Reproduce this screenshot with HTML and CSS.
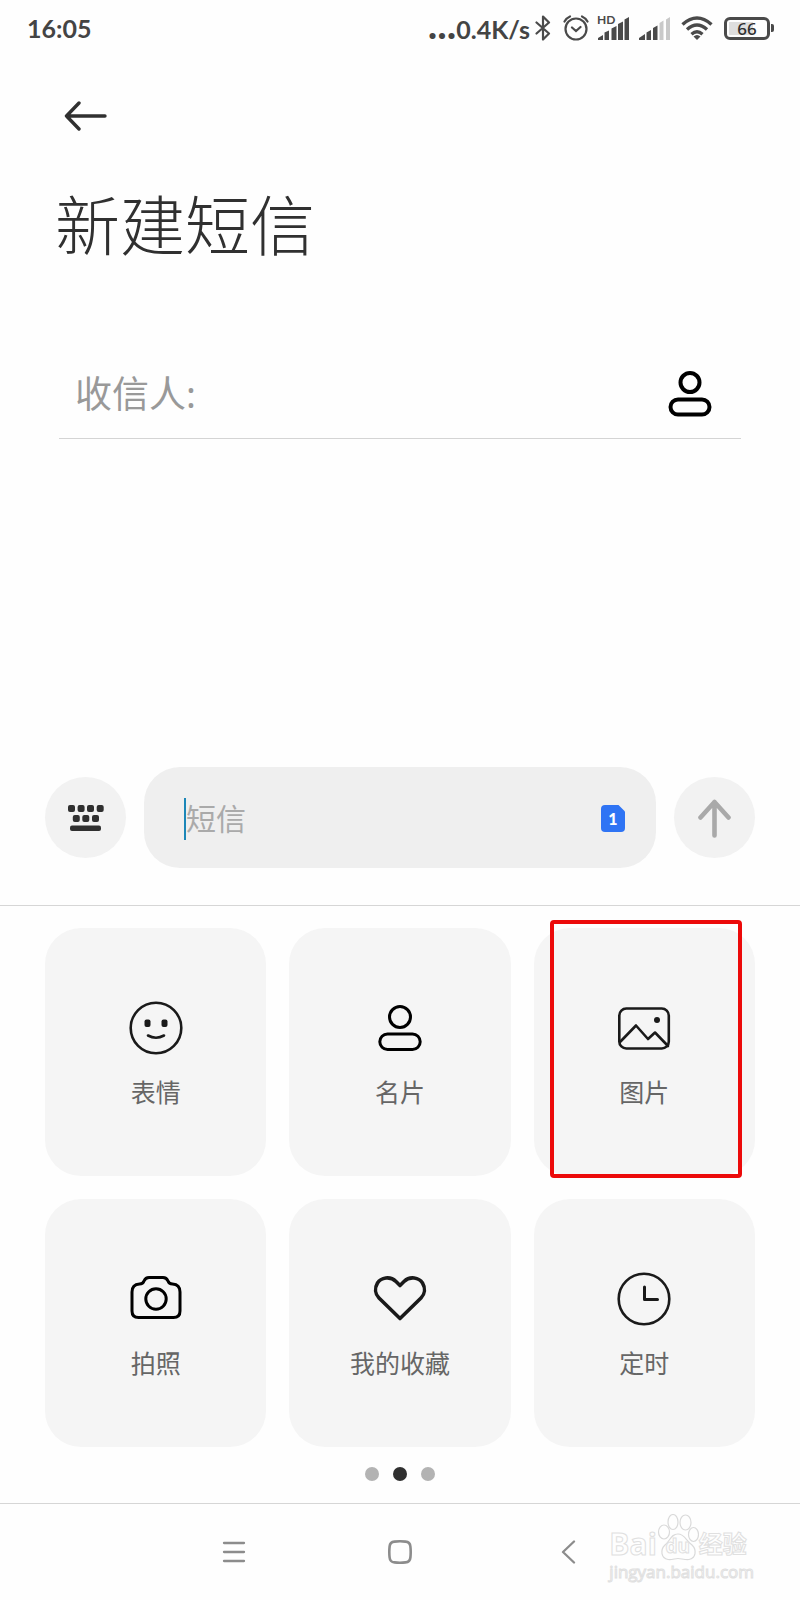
FILE: index.html
```html
<!DOCTYPE html>
<html lang="zh-CN">
<head>
<meta charset="utf-8">
<meta name="viewport" content="width=device-width, initial-scale=1">
<title>新建短信</title>
<link rel="stylesheet" href="styles.css">
</head>
<body>
<div class="status">
  <span class="status-text">16:05</span>
  <div class="status-right">
    <span class="status-text"><span class="ellipsis">...</span>0.4K/s</span>
    <svg class="bluetooth" width="16" height="26" viewBox="0 0 16 26" fill="none" stroke="#4a4a4a" stroke-width="2.2" stroke-linejoin="round" stroke-linecap="round"><path d="M1.5 7.5 14 18.500 8 24.500V1.500L14 7.500 1.500 18.500"/></svg>
    <svg class="alarm" width="26" height="26" viewBox="0 0 26 26" fill="none" stroke="#4a4a4a" stroke-width="2.2" stroke-linecap="round"><circle cx="13" cy="14" r="10.500"/><path d="M1.500 6.500Q3.500 3 7 1.500M24.500 6.500Q22.500 3 19 1.500M9 12.500l4 3.500 4.500-4"/></svg>
    <span class="cell">
      <span class="cell-tag">HD</span>
      <svg width="31" height="23" viewBox="0 0 31 23" fill="#4a4a4a"><path d="M0 23v-2l5-3v5zM6.500 15.500l4.500-2V23H6.500zM13.500 11.500l5-2.500V23h-5zM20 7l5-2.500V23h-5zM26.500 2.500 31 0v23h-4.500z"/></svg>
    </span>
    <svg class="cell-two" width="31" height="23" viewBox="0 0 31 23" fill="#4a4a4a"><path d="M0 23v-2l6-4v6zM7.500 15.500l4.500-2.500v10H7.500zM14 11l4.500-2.500V23H14z"/><path fill="#c9c9c9" d="M20.500 6l4-2.500V23h-4zM27 2.500 31 0v23h-4z"/></svg>
    <svg class="wifi" width="32" height="24" viewBox="0 0 32 24" fill="none" stroke="#4a4a4a" stroke-width="3.400"><path d="M1.500 8.500Q16-4.500 30.500 8.500M6 13.500Q16 4.500 26 13.500M10.500 18.200Q16 13.500 21.500 18.200"/><path d="M12.500 20.500Q16 17.500 19.500 20.500L16 24z" fill="#4a4a4a" stroke="none"/></svg>
    <span class="battery"><span class="battery-level">66</span></span>
  </div>
</div>

<header class="header">
  <button class="plain back" type="button" aria-label="返回"><svg width="44" height="30" viewBox="0 0 44 30" fill="none" stroke="#303030" stroke-width="3.400" stroke-linecap="round" stroke-linejoin="round"><path d="M41 15H2.500M15 2 2.500 15 15 28"/></svg></button>
  <h1 class="title">新建短信</h1>
</header>

<main class="main">
  <div class="recipient">
    <label class="recipient-label" for="to">收信人:</label>
    <input class="recipient-input" id="to" type="text">
    <button class="plain" type="button" aria-label="选择联系人"><svg width="44" height="46" viewBox="0 0 44 46" fill="none" stroke="#000" stroke-width="4"><circle cx="22" cy="11.500" r="9.500"/><rect x="2.500" y="28.500" width="39" height="15" rx="7.500"/></svg></button>
  </div>
</main>

<form class="composer">
  <button class="round" type="button" aria-label="键盘"><svg width="36" height="28" viewBox="0 0 36 28" fill="#303030"><rect x="0" y="1" width="7" height="7" rx="2"/><rect x="9.600" y="1" width="7" height="7" rx="2"/><rect x="19" y="1" width="7" height="7" rx="2"/><rect x="28.700" y="1" width="7" height="7" rx="2"/><rect x="4.800" y="11" width="7" height="7" rx="2"/><rect x="14.300" y="11" width="7" height="7" rx="2"/><rect x="24" y="11" width="7" height="7" rx="2"/><rect x="2" y="21.500" width="31" height="5.500" rx="2"/></svg></button>
  <div class="message">
    <span class="caret"></span>
    <input class="message-input" type="text" placeholder="短信" aria-label="短信">
    <button class="plain sim" type="button" aria-label="SIM 卡 1"><svg width="24" height="27" viewBox="0 0 24 27"><path fill="#2f74f4" d="M4 0h13.500L24 6.500V23a4 4 0 0 1-4 4H4a4 4 0 0 1-4-4V4a4 4 0 0 1 4-4z"/></svg><span class="sim-number">1</span></button>
  </div>
  <button class="round" type="submit" aria-label="发送"><svg width="34" height="40" viewBox="0 0 34 40" fill="none" stroke="#a9a9a9" stroke-width="4.600" stroke-linecap="round" stroke-linejoin="round"><path d="M16.500 37.500V4M2.500 19.500 16.500 4 30.500 19.500"/></svg></button>
</form>

<section class="panel">
  <div class="tiles">
    <button class="tile" type="button">
      <svg class="tile-icon" viewBox="0 0 54 54"><circle cx="27" cy="27" r="25.300"/><path d="M19 34.500Q27 39 35 34.500"/><g class="solid"><rect x="15.500" y="18.500" width="6" height="7.500" rx="2"/><rect x="32.500" y="18.500" width="6" height="7.500" rx="2"/></g></svg>
      <span class="tile-label">表情</span>
    </button>
    <button class="tile" type="button">
      <svg class="tile-icon dark" viewBox="0 0 54 54"><circle cx="27" cy="16" r="10.500"/><rect x="6.800" y="33" width="40.400" height="15.500" rx="7.700"/></svg>
      <span class="tile-label">名片</span>
    </button>
    <button class="tile" type="button">
      <svg class="tile-icon" viewBox="0 0 54 54"><rect x="2.300" y="7.500" width="49.500" height="40" rx="7"/><path d="M3.500 40.500 19 24.500 31 38l7-6.500L51 45"/><circle class="solid" cx="40" cy="19" r="3"/></svg>
      <span class="tile-label">图片</span>
      <span class="highlight"></span>
    </button>
    <button class="tile" type="button">
      <svg class="tile-icon dark" viewBox="0 0 54 54"><path d="M20 5.500H34Q37.500 5.500 39 9Q40 12 43.500 12Q51 12.500 51 20V39Q51 45.500 44.500 45.500H9.500Q3 45.500 3 39V20Q3 12.500 10.500 12Q14 12 15 9Q16.500 5.500 20 5.500z"/><circle cx="27" cy="27" r="10.200"/></svg>
      <span class="tile-label">拍照</span>
    </button>
    <button class="tile" type="button">
      <svg class="tile-icon heavy" viewBox="0 0 54 54"><path d="M27 13.500 23 9.500C17 3.500 8 5.500 4.500 11C1.500 16 2 22 6 26L27 46.500 48 26C52 22 52.500 16 49.500 11C46 5.500 37 3.500 31 9.500z"/></svg>
      <span class="tile-label">我的收藏</span>
    </button>
    <button class="tile" type="button">
      <svg class="tile-icon" viewBox="0 0 54 54"><circle cx="27" cy="27" r="25.300"/><path stroke-width="3" d="M27.500 15V27.500H40.500"/></svg>
      <span class="tile-label">定时</span>
    </button>
  </div>
  <div class="pager"><span class="dot"></span><span class="dot current"></span><span class="dot"></span></div>
</section>

<nav class="nav">
  <button class="plain nav-button" type="button" aria-label="菜单"><svg width="24" height="24" viewBox="0 0 24 24" fill="none" stroke="#8c8c8c" stroke-width="2.300" stroke-linecap="round"><path d="M2 3H22M2 12H22M2 21H22"/></svg></button>
  <button class="plain nav-button" type="button" aria-label="主屏幕"><svg width="24" height="24" viewBox="0 0 24 24" fill="none" stroke="#8c8c8c" stroke-width="2.600"><path d="M6.500 1.600Q12 1 17.500 1.600Q22 2 22.400 6.500Q23 12 22.400 17.500Q22 22 17.500 22.400Q12 23 6.500 22.400Q2 22 1.600 17.500Q1 12 1.600 6.500Q2 2 6.500 1.600z"/></svg></button>
  <button class="plain nav-button" type="button" aria-label="后退"><svg width="24" height="24" viewBox="0 0 24 24" fill="none" stroke="#8c8c8c" stroke-width="2.300" stroke-linecap="round" stroke-linejoin="round"><path d="M20 1.500 9 12 20 22.500"/></svg></button>
  <div class="watermark">
    <div class="brand"><span>Bai</span><span class="paw"><svg width="42" height="48" viewBox="0 0 42 48" fill="#fefefe" stroke="#dadada" stroke-width="1.200"><ellipse cx="7" cy="18" rx="5.500" ry="7"/><ellipse cx="16" cy="8" rx="5" ry="7.500"/><ellipse cx="28.500" cy="8.500" rx="5.500" ry="7.500"/><ellipse cx="36.500" cy="20.500" rx="5" ry="7"/><path d="M21 20C14 20 13 27 8 31C3 36 4 44 11 45.500C15 46 18 44.500 21 44.500S28 46 32 45.500C39 44 40 36 35 31C29 27 28 20 21 20z"/></svg><span class="paw-text">du</span></span><span class="brand-cn">经验</span></div>
    <div class="site">jingyan.baidu.com</div>
  </div>
</nav>
</body>
</html>
```
FILE: styles.css
```css
* { box-sizing: border-box; }

body {
  margin: 0;
  min-height: 100vh;
  display: flex;
  flex-direction: column;
  background: #fefefe;
  color: #303030;
  font-family: "Noto Sans", "Noto Sans CJK SC", sans-serif;
}

button, input { font: inherit; color: inherit; }
svg { display: block; }

.plain {
  padding: 0;
  border: 0;
  background: none;
}

/* Status bar */
.status {
  display: flex;
  justify-content: space-between;
  align-items: center;
  height: 56px;
  padding: 0 26px 0 27px;
}
.status-text {
  font-family: Lato, sans-serif;
  font-size: 25px;
  line-height: 32px;
  font-weight: 700;
  color: #444;
}
.ellipsis { font-size: 40px; line-height: 24px; }
.status-right { display: flex; align-items: center; }
.bluetooth { margin-left: 5px; }
.alarm { margin-left: 12px; }
.cell { position: relative; margin-left: 9px; }
.cell-tag {
  position: absolute;
  left: -1px;
  top: -3px;
  font-family: Lato, sans-serif;
  font-size: 12px;
  line-height: 12px;
  font-weight: 700;
  color: #4a4a4a;
}
.cell-two { margin-left: 10px; }
.wifi { margin-left: 11px; }
.battery {
  position: relative;
  width: 46px;
  height: 23px;
  margin: 0 4px 0 11px;
  padding: 2px;
  border: 3px solid #4a4a4a;
  border-radius: 6px;
}
.battery::after {
  content: "";
  position: absolute;
  left: 44px;
  top: 4px;
  width: 3px;
  height: 8px;
  border-radius: 0 2px 2px 0;
  background: #4a4a4a;
}
.battery-level {
  display: block;
  font-size: 17px;
  line-height: 13px;
  font-weight: 500;
  text-align: center;
  background: linear-gradient(90deg, #dedede 66%, transparent 66%);
}

/* Header */
.header { padding: 45px 55px 0; }
.back { display: block; margin-left: 9px; }
.title {
  margin: 51px 0 0;
  font-family: "Noto Sans CJK SC", sans-serif;
  font-size: 65px;
  line-height: 80px;
  font-weight: 300;
}

/* Recipient */
.main {
  flex: 1;
  padding: 88px 59px 0;
}
.recipient {
  display: flex;
  align-items: center;
  height: 89px;
  padding: 0 29px 0 16px;
  border-bottom: 1px solid #d4d4d4;
}
.recipient-label {
  font-size: 37px;
  line-height: 48px;
  color: #999;
}
.recipient-input {
  flex: 1;
  min-width: 0;
  border: 0;
  outline: 0;
  background: none;
  font-size: 37px;
}

/* Composer */
.composer {
  display: flex;
  align-items: center;
  gap: 18px;
  padding: 0 45px 37px;
  border-bottom: 1px solid #d6d6d6;
}
.round {
  display: flex;
  align-items: center;
  justify-content: center;
  width: 81px;
  height: 81px;
  flex: none;
  padding: 0;
  border: 0;
  border-radius: 50%;
  background: #f2f2f2;
}
.message {
  flex: 1;
  min-width: 0;
  display: flex;
  align-items: center;
  height: 101px;
  padding: 2px 31px 0 40px;
  border-radius: 36px;
  background: #efefef;
}
.caret {
  width: 2px;
  height: 42px;
  background: #1c87b8;
}
.message-input {
  flex: 1;
  min-width: 0;
  padding: 0;
  border: 0;
  outline: 0;
  background: none;
  font-size: 30px;
  line-height: 40px;
}
.message-input::placeholder { color: #aaa; opacity: 1; }
.sim { position: relative; }
.sim-number {
  position: absolute;
  inset: 0;
  font-family: Lato, sans-serif;
  font-size: 16px;
  line-height: 28px;
  font-weight: 900;
  text-align: center;
  color: #fff;
}

/* Attachment panel */
.panel { padding: 22px 45px; }
.tiles {
  display: grid;
  grid-template-columns: repeat(3, 1fr);
  gap: 23px;
}
.tile {
  position: relative;
  display: flex;
  flex-direction: column;
  align-items: center;
  gap: 22px;
  padding: 73px 0 69px;
  border: 0;
  border-radius: 36px;
  background: #f5f5f5;
}
.tile-icon {
  width: 54px;
  height: 54px;
  fill: none;
  stroke: #1a1a1a;
  stroke-width: 2.6;
  stroke-linecap: round;
  stroke-linejoin: round;
}
.tile-icon.dark { stroke: #000; stroke-width: 3; }
.tile-icon.heavy { stroke-width: 3.6; }
.tile-icon .solid { fill: #1a1a1a; stroke: none; }
.tile-label {
  font-size: 25px;
  line-height: 30px;
  color: #666;
}
.highlight {
  position: absolute;
  inset: -8px 13px -2px 16px;
  border: 4px solid #ec0a0a;
  border-radius: 4px;
}
.pager {
  display: flex;
  justify-content: center;
  gap: 14px;
  margin-top: 20px;
}
.dot {
  width: 14px;
  height: 14px;
  border-radius: 50%;
  background: #b3b3b3;
}
.dot.current { background: #303030; }

/* System navigation */
.nav {
  position: relative;
  display: flex;
  justify-content: center;
  height: 97px;
  border-top: 1px solid #d6d6d6;
}
.nav-button {
  display: flex;
  align-items: center;
  justify-content: center;
  width: 166px;
}
.watermark {
  position: absolute;
  right: 46px;
  top: 10px;
  color: #fefefe;
  font-family: "Open Sans", "Noto Sans CJK SC", sans-serif;
  -webkit-text-stroke: 1px #e0e0e0;
}
.brand {
  display: flex;
  align-items: flex-end;
  font-size: 30px;
  line-height: 36px;
  font-weight: 700;
}
.brand-cn { font-size: 24px; }
.paw { position: relative; }
.paw-text {
  position: absolute;
  inset: 20px 0 0;
  font-size: 19px;
  line-height: 24px;
  text-align: center;
}
.site {
  font-size: 17px;
  line-height: 20px;
  text-align: right;
}
```
